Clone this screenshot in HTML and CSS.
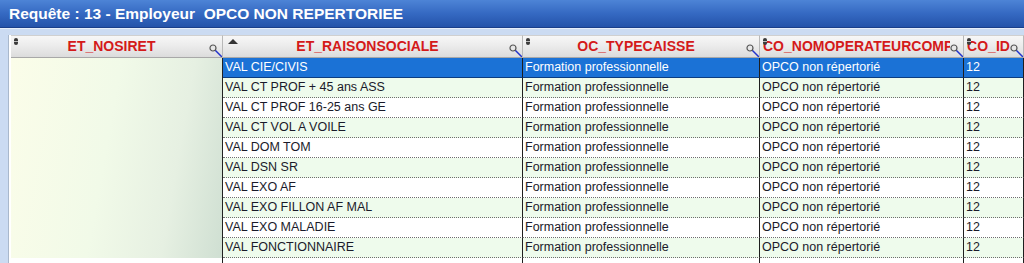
FILE: index.html
```html
<!DOCTYPE html>
<html lang="fr">
<head>
<meta charset="utf-8">
<title>Requête</title>
<link rel="stylesheet" href="styles.css">
</head>
<body>
<div class="window">
  <div class="titlebar">Requête : 13 - Employeur&nbsp; OPCO NON REPERTORIEE</div>
  <div class="frame">
    <div class="grid">
      <div class="hcell">
        <span class="ico-ud"></span>
        <span class="hlabel">ET_NOSIRET</span>
        <svg class="mag" width="14" height="14" viewBox="0 0 14 14"><line x1="6" y1="6" x2="13" y2="13" stroke="#2233cc" stroke-width="1.5"/><circle cx="4" cy="4" r="3" fill="#e8e8e8" stroke="#555" stroke-width="1.2"/></svg>
      </div>
      <div class="hcell">
        <span class="ico-sort"></span>
        <span class="hlabel">ET_RAISONSOCIALE</span>
        <svg class="mag" width="14" height="14" viewBox="0 0 14 14"><line x1="6" y1="6" x2="13" y2="13" stroke="#2233cc" stroke-width="1.5"/><circle cx="4" cy="4" r="3" fill="#e8e8e8" stroke="#555" stroke-width="1.2"/></svg>
      </div>
      <div class="hcell">
        <span class="ico-ud"></span>
        <span class="hlabel">OC_TYPECAISSE</span>
        <svg class="mag" width="14" height="14" viewBox="0 0 14 14"><line x1="6" y1="6" x2="13" y2="13" stroke="#2233cc" stroke-width="1.5"/><circle cx="4" cy="4" r="3" fill="#e8e8e8" stroke="#555" stroke-width="1.2"/></svg>
      </div>
      <div class="hcell">
        <span class="ico-ud"></span>
        <span class="hlabel">CO_NOMOPERATEURCOMP</span>
        <svg class="mag" width="14" height="14" viewBox="0 0 14 14"><line x1="6" y1="6" x2="13" y2="13" stroke="#2233cc" stroke-width="1.5"/><circle cx="4" cy="4" r="3" fill="#e8e8e8" stroke="#555" stroke-width="1.2"/></svg>
      </div>
      <div class="hcell">
        <span class="ico-ud"></span>
        <span class="hlabel">CO_ID</span>
        <svg class="mag" width="14" height="14" viewBox="0 0 14 14"><line x1="6" y1="6" x2="13" y2="13" stroke="#2233cc" stroke-width="1.5"/><circle cx="4" cy="4" r="3" fill="#e8e8e8" stroke="#555" stroke-width="1.2"/></svg>
      </div>
      <div class="hfill"></div>

      <div class="emptycol"></div>

      <div class="cell sel">VAL CIE/CIVIS</div><div class="cell sel">Formation professionnelle</div><div class="cell sel">OPCO non répertorié</div><div class="cell sel">12</div><div class="cell sel fill"></div>
      <div class="cell alt">VAL CT PROF + 45 ans ASS</div><div class="cell alt">Formation professionnelle</div><div class="cell alt">OPCO non répertorié</div><div class="cell alt">12</div><div class="cell alt fill"></div>
      <div class="cell">VAL CT PROF 16-25 ans GE</div><div class="cell">Formation professionnelle</div><div class="cell">OPCO non répertorié</div><div class="cell">12</div><div class="cell fill"></div>
      <div class="cell alt">VAL CT VOL A VOILE</div><div class="cell alt">Formation professionnelle</div><div class="cell alt">OPCO non répertorié</div><div class="cell alt">12</div><div class="cell alt fill"></div>
      <div class="cell">VAL DOM TOM</div><div class="cell">Formation professionnelle</div><div class="cell">OPCO non répertorié</div><div class="cell">12</div><div class="cell fill"></div>
      <div class="cell alt">VAL DSN SR</div><div class="cell alt">Formation professionnelle</div><div class="cell alt">OPCO non répertorié</div><div class="cell alt">12</div><div class="cell alt fill"></div>
      <div class="cell">VAL EXO AF</div><div class="cell">Formation professionnelle</div><div class="cell">OPCO non répertorié</div><div class="cell">12</div><div class="cell fill"></div>
      <div class="cell alt">VAL EXO FILLON AF MAL</div><div class="cell alt">Formation professionnelle</div><div class="cell alt">OPCO non répertorié</div><div class="cell alt">12</div><div class="cell alt fill"></div>
      <div class="cell">VAL EXO MALADIE</div><div class="cell">Formation professionnelle</div><div class="cell">OPCO non répertorié</div><div class="cell">12</div><div class="cell fill"></div>
      <div class="cell alt">VAL FONCTIONNAIRE</div><div class="cell alt">Formation professionnelle</div><div class="cell alt">OPCO non répertorié</div><div class="cell alt">12</div><div class="cell alt fill"></div>

      <div class="cell tail"></div><div class="cell tail"></div><div class="cell tail"></div><div class="cell tail"></div><div class="cell tail"></div><div class="cell tail fill"></div>
    </div>
  </div>
</div>
</body>
</html>
```

FILE: styles.css
```css
* { box-sizing: border-box; }
html, body { margin: 0; padding: 0; }
body {
  width: 1024px;
  height: 263px;
  overflow: hidden;
  background: #ffffff;
  font-family: "Liberation Sans", Arial, sans-serif;
}
.window {
  width: 1024px;
  height: 263px;
  display: flex;
  flex-direction: column;
  overflow: hidden;
}
.titlebar {
  height: 28px;
  flex: none;
  background: linear-gradient(to bottom, #4d84d6 0%, #3569c2 50%, #2453aa 100%);
  color: #ffffff;
  font-weight: bold;
  font-size: 15.5px;
  line-height: 27px;
  padding-left: 9px;
  white-space: pre;
  border-bottom: 1px solid #1a3f8a;
}
.frame {
  flex: 1;
  background: #cbdbf2;
  padding: 6px 0 0 8px;
  border-top: 1px solid #e6eefa;
}
.grid {
  display: grid;
  grid-template-columns: 2px 212px 300px 237px 204px 60px 1fr;
  grid-template-rows: 23px repeat(10, 20px) 20px;
  background: #ffffff;
  height: 100%;
  border-left: 1px solid #a9b8cc;
}
.grid::before {
  content: "";
  grid-column: 1;
  grid-row: 1 / span 12;
  background: #ffffff;
}
.hcell {
  position: relative;
  background: linear-gradient(to bottom, #f7f7f7 0%, #ececec 45%, #dcdcdc 100%);
  border-top: 1px solid #d0d0d0;
  border-bottom: 1px solid #a8a8a8;
  border-right: 1px solid #b8b8b8;
  text-align: center;
  overflow: hidden;
  padding: 0 13px 0 3px;
  white-space: nowrap;
}
.hlabel {
  display: block;
  color: #d41a1a;
  font-weight: bold;
  font-size: 14px;
  line-height: 21px;
  overflow: hidden;
}
.hfill {
  background: linear-gradient(to bottom, #f7f7f7 0%, #ececec 45%, #dcdcdc 100%);
  border-top: 1px solid #d0d0d0;
  border-bottom: 1px solid #a8a8a8;
}
.ico-ud {
  position: absolute;
  left: 3px;
  top: 2px;
  width: 4px;
  height: 7px;
  border-radius: 2px;
  background: #3a3a3a;
}
.ico-ud::before {
  content: "";
  position: absolute;
  left: 0;
  top: 3px;
  width: 4px;
  height: 1px;
  background: #bbbbbb;
}
.ico-sort {
  position: absolute;
  left: 5px;
  top: 3px;
  width: 0;
  height: 0;
  border-left: 5px solid transparent;
  border-right: 5px solid transparent;
  border-bottom: 5px solid #333333;
}
.mag {
  position: absolute;
  right: -1px;
  bottom: -1px;
}
.emptycol {
  grid-column: 2;
  grid-row: 2 / span 10;
  background: linear-gradient(100deg, #fbfde9 0%, #f1fae8 45%, #e6f0e2 75%, #cfdfd2 100%);
  border-right: 1px solid #222222;
}
.cell {
  font-size: 12.5px;
  line-height: 19px;
  color: #1a1a2a;
  padding-left: 2px;
  white-space: nowrap;
  overflow: hidden;
  background: #ffffff;
  border-right: 1px solid #1e1e1e;
  border-bottom: 1px dotted #6e6e6e;
}
.cell.alt { background: #eefbec; }
.cell.sel {
  background: #1b72d6;
  color: #ffffff;
  border-bottom: 1px solid #0c3d80;
}
.cell.fill { border-right: none; }
.cell.tail { border-bottom: none; background: #ffffff; }
```
